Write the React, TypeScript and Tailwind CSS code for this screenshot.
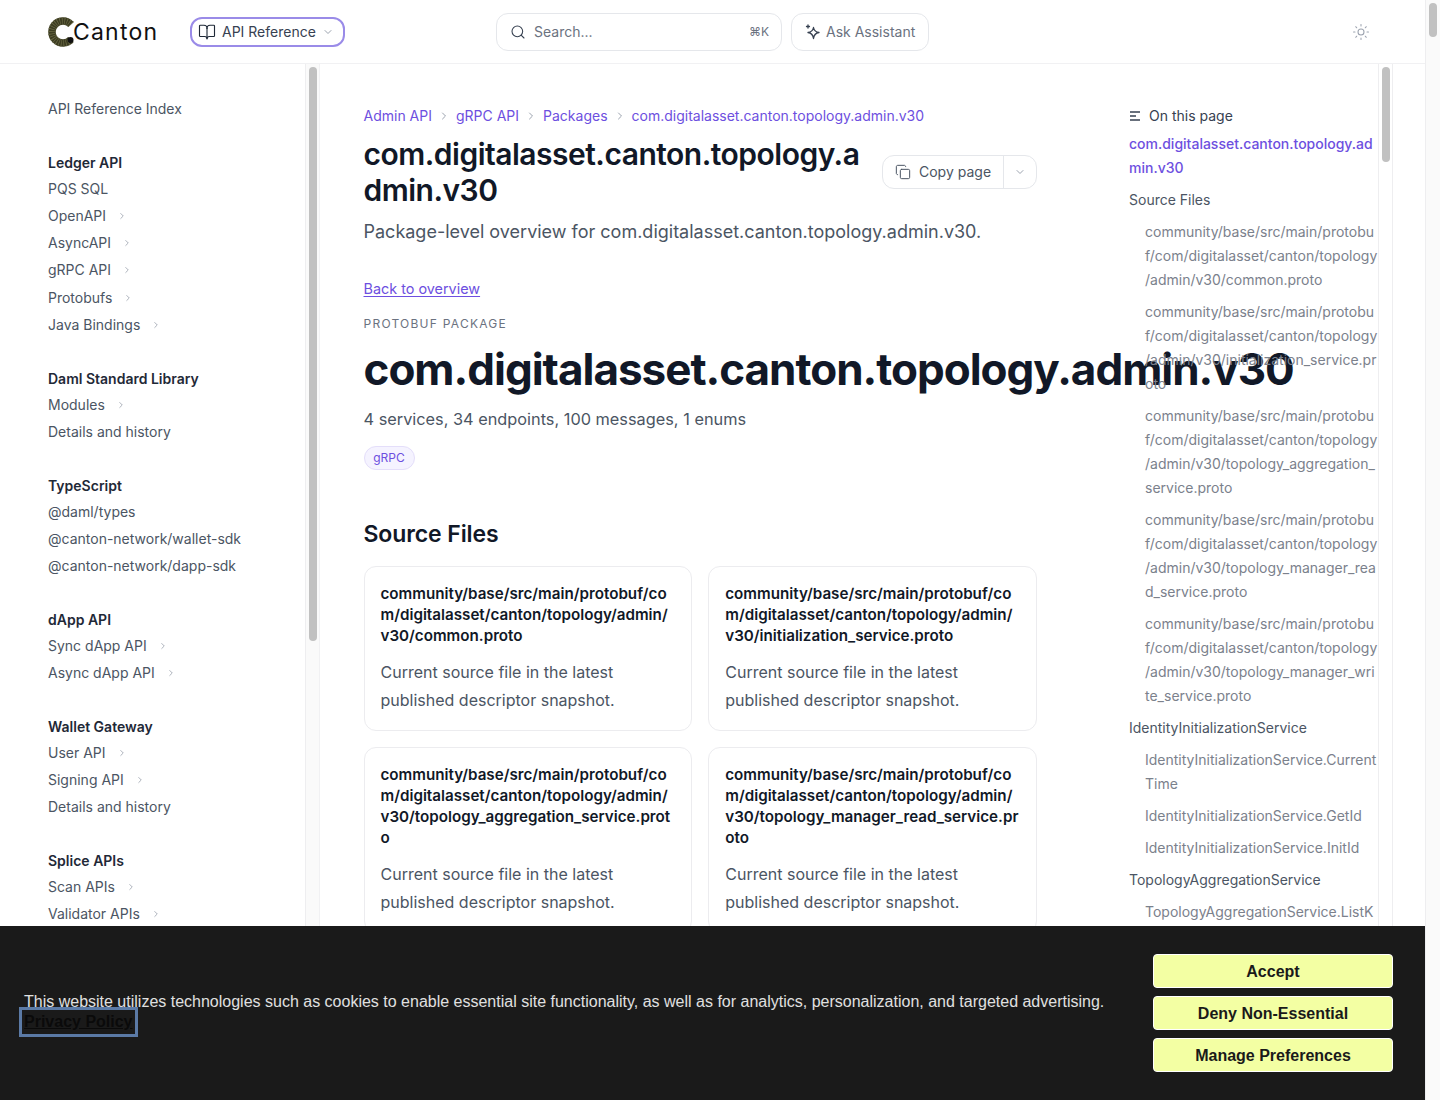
import React from 'react';
import { BookOpen, ChevronDown, ChevronRight, Copy, Search, Sun } from 'lucide-react';

type NavItem = { label: string; more?: boolean };
type NavGroup = { title?: string; items: NavItem[] };

const navGroups: NavGroup[] = [
  { items: [{ label: 'API Reference Index' }] },
  {
    title: 'Ledger API',
    items: [
      { label: 'PQS SQL' },
      { label: 'OpenAPI', more: true },
      { label: 'AsyncAPI', more: true },
      { label: 'gRPC API', more: true },
      { label: 'Protobufs', more: true },
      { label: 'Java Bindings', more: true },
    ],
  },
  {
    title: 'Daml Standard Library',
    items: [{ label: 'Modules', more: true }, { label: 'Details and history' }],
  },
  {
    title: 'TypeScript',
    items: [{ label: '@daml/types' }, { label: '@canton-network/wallet-sdk' }, { label: '@canton-network/dapp-sdk' }],
  },
  {
    title: 'dApp API',
    items: [{ label: 'Sync dApp API', more: true }, { label: 'Async dApp API', more: true }],
  },
  {
    title: 'Wallet Gateway',
    items: [{ label: 'User API', more: true }, { label: 'Signing API', more: true }, { label: 'Details and history' }],
  },
  {
    title: 'Splice APIs',
    items: [{ label: 'Scan APIs', more: true }, { label: 'Validator APIs', more: true }, { label: 'Wallet APIs', more: true }],
  },
];

const basePath = 'community/base/src/main/protobuf/com/digitalasset/canton/topology/admin/v30/';

const sourceFiles = [
  'common.proto',
  'initialization_service.proto',
  'topology_aggregation_service.proto',
  'topology_manager_read_service.proto',
  'topology_manager_write_service.proto',
];

const tocEntries: { label: string; sub?: boolean }[] = [
  { label: 'Source Files' },
  // zero-width space so a line can start with the slash
  ...sourceFiles.map((f) => ({ label: (basePath + f).replaceAll('/', '\u200b/'), sub: true })),
  { label: 'IdentityInitializationService' },
  { label: 'IdentityInitializationService.CurrentTime', sub: true },
  { label: 'IdentityInitializationService.GetId', sub: true },
  { label: 'IdentityInitializationService.InitId', sub: true },
  { label: 'TopologyAggregationService' },
  { label: 'TopologyAggregationService.ListKeyOwners', sub: true },
];

const crumbs = ['Admin API', 'gRPC API', 'Packages', 'com.digitalasset.canton.topology.admin.v30'];

const CantonLogo = () => (
  <svg width="28" height="30" viewBox="0 0 28 30" className="shrink-0">
    <path d="M23 7.5 A11 11 0 1 0 23 22.5" fill="none" stroke="#3c3c22" strokeWidth="7.5" />
    <path d="M23 7.5 A11 11 0 1 0 23 22.5" fill="none" stroke="#6a6a45" strokeWidth="7.5" strokeDasharray="0.7 1.6" />
    <circle cx="22.5" cy="23" r="3" fill="#111111" />
  </svg>
);

const AssistantIcon = () => (
  <svg width="16" height="16" viewBox="0 0 16 16" fill="none" stroke="#374151" strokeWidth="1.3" strokeLinejoin="round">
    <path d="M8.5 3.5 C9 6.5 10.5 8 14 8.5 C10.5 9 9 10.5 8.5 14.5 C8 10.5 6.5 9 3 8.5 C6.5 8 8 6.5 8.5 3.5 Z" />
    <path d="M3 1v3M1.5 2.5h3" strokeLinecap="round" />
  </svg>
);

const TocIcon = () => (
  <svg width="12" height="12" viewBox="0 0 12 12" stroke="#374151" strokeWidth="1.3">
    <path d="M1 2h10M1 6h6M1 10h10" />
  </svg>
);

const Scrollbar = ({ height, track }: { height: string; track: string }) => (
  <div className={`${track} shrink-0 pt-[3px]`}>
    <div className={`${height} rounded-full bg-[#c1c1c1]`} />
  </div>
);

const Header = () => (
  <header className="flex h-[64px] shrink-0 items-center border-b border-[#f1f1f3] pl-12">
    <div className="flex w-[142px] items-center">
      <CantonLogo />
      <span className="-ml-[3px] pt-[2px] text-[23px] leading-none font-normal tracking-[1.2px] text-[#111111]">Canton</span>
    </div>
    <button className="flex h-[30px] w-[155px] items-center rounded-xl border-2 border-[#9a8be8] pl-[6px] text-sm text-[#374151]">
      <BookOpen size={18} strokeWidth={1.5} className="text-[#1f2937]" />
      <span className="ml-[6px]">API Reference</span>
      <ChevronDown size={12} className="ml-[6px] text-[#9ca3af]" />
    </button>
    <div className="ml-[151px] flex h-[38px] w-[286px] items-center rounded-xl border border-[#e5e7eb] pr-3 pl-[13px] text-sm text-[#6b7280]">
      <Search size={16} strokeWidth={1.6} className="text-[#374151]" />
      <span className="ml-2">Search...</span>
      <span className="ml-auto text-xs text-[#6b7280]">⌘K</span>
    </div>
    <div className="ml-[9px] flex h-[38px] w-[138px] items-center rounded-xl border border-[#e5e7eb] pl-[13px] text-sm text-[#6b7280]">
      <AssistantIcon />
      <span className="ml-[5px]">Ask Assistant</span>
    </div>
    <Sun size={18} strokeWidth={1.4} className="ml-[423px] text-[#9ca3af]" />
  </header>
);

const Sidebar = () => (
  <aside className="flex w-[320px] shrink-0 border-r border-[#f1f1f3]">
    <nav className="flex w-[306px] shrink-0 flex-col gap-[26.6px] border-r border-[#eeeef0] pt-[31.5px] pl-12 text-sm text-[#4b5563]">
      {navGroups.map((group, i) => (
        <div key={i}>
          {group.title && (
            <div className="flex h-[26px] items-center pt-[2px] font-semibold text-[#1f2937]">{group.title}</div>
          )}
          {group.items.map((item) => (
            <div key={item.label} className="flex h-[27.2px] items-center">
              {item.label}
              {item.more && <ChevronRight size={10} className="ml-[11px] text-[#9ca3af]" />}
            </div>
          ))}
        </div>
      ))}
    </nav>
    <Scrollbar height="h-[574px]" track="w-[13px] bg-[#fafafa] pl-[3px] pr-[2px]" />
  </aside>
);

const SourceCard = ({ file }: { file: string }) => (
  <div className="rounded-xl border border-[#ececef] p-4">
    <div className="text-[15.2px] leading-[21px] font-semibold break-all text-[#111827]">{basePath + file}</div>
    <p className="mt-3 text-base leading-7 text-[#4b5563]">Current source file in the latest published descriptor snapshot.</p>
  </div>
);

const Main = () => (
  <main className="w-[809px] shrink-0 pt-[42px] pl-[43.5px]">
    <div className="w-[673.5px]">
      <div className="flex h-[20px] items-center text-sm text-[#6d4fe0]">
        {crumbs.map((c, i) => (
          <React.Fragment key={c}>
            {i > 0 && <ChevronRight size={12} className="mx-[6px] text-[#9ca3af]" />}
            <span>{c}</span>
          </React.Fragment>
        ))}
      </div>
      <div className="mt-[10px] flex items-center">
        <h1 className="w-[500px] text-[30px] leading-9 font-semibold tracking-[-0.5px] break-all text-[#111827]">
          com.digitalasset.canton.topology.admin.v30
        </h1>
        <div className="ml-auto flex h-[34px] w-[155px] items-center rounded-xl border border-[#e5e7eb] text-sm text-[#4b5563]">
          <Copy size={16} strokeWidth={1.5} className="ml-[12px]" />
          <span className="ml-2">Copy page</span>
          <span className="ml-auto flex h-full w-[33px] items-center justify-center border-l border-[#e5e7eb]">
            <ChevronDown size={12} className="text-[#9ca3af]" />
          </span>
        </div>
      </div>
      <p className="mt-[10px] text-lg leading-7 text-[#4b5563]">
        Package-level overview for com.digitalasset.canton.topology.admin.v30.
      </p>
      <a className="mt-[33px] block w-fit text-[14.4px] leading-5 text-[#6d4fe0] underline underline-offset-2">Back to overview</a>
      <div className="mt-[17px] text-xs leading-4 tracking-[1.25px] text-[#6b7280]">PROTOBUF PACKAGE</div>
      <h2 className="mt-[9px] text-[44px] leading-[56px] font-bold tracking-[-1px] whitespace-nowrap text-[#111827]">
        com.digitalasset.canton.topology.admin.v30
      </h2>
      <p className="mt-[8px] text-[16.32px] leading-7 text-[#4b5563]">4 services, 34 endpoints, 100 messages, 1 enums</p>
      <span className="mt-[13px] flex h-[24px] w-[51px] items-center justify-center rounded-full border border-[#e4defa] bg-[#f5f3ff] text-xs text-[#6d4fe0]">
        gRPC
      </span>
      <h3 className="mt-[48px] text-[23px] leading-8 font-semibold tracking-[-0.1px] text-[#111827]">Source Files</h3>
      <div className="mt-4 grid grid-cols-2 gap-4">
        {sourceFiles.map((f) => (
          <SourceCard key={f} file={f} />
        ))}
      </div>
    </div>
  </main>
);

const Toc = () => (
  <aside className="flex w-[264px] shrink-0">
    <div className="w-[249px] shrink-0 pt-[42px] text-sm leading-6 text-[#6b7280]">
      <div className="flex h-[20px] items-center text-[#374151]">
        <TocIcon />
        <span className="ml-2">On this page</span>
      </div>
      <div className="mt-[6px] font-medium break-all text-[#6d4fe0]">com.digitalasset.canton.topology.admin.v30</div>
      {tocEntries.map((e) => (
        <div key={e.label} className={e.sub ? 'mt-2 break-all pl-4 text-[#7b818c]' : 'mt-2 text-[#4b5563]'}>
          {e.label}
        </div>
      ))}
    </div>
    <Scrollbar height="h-[95px]" track="w-[15px] border-x border-[#eeeef0] pl-[3px] pr-[2px]" />
  </aside>
);

const CookieBanner = () => (
  <div className="absolute inset-x-0 bottom-0 flex h-[174px] items-center bg-[#1a1a1a] pr-8 pl-6 font-['Liberation_Sans',Arial,sans-serif] text-base">
    <div className="mb-[2px] flex-1 pr-[48px] leading-5 text-[#e0e0e0]">
      <p>This website utilizes technologies such as cookies to enable essential site functionality, as well as for analytics, personalization, and targeted advertising.</p>
      <a className="block w-fit font-bold text-[#0a0a0a] underline outline-[3px] outline-offset-[2px] outline-[#5b7aa6]">Privacy Policy</a>
    </div>
    <div className="flex w-[240px] shrink-0 flex-col gap-2">
      {['Accept', 'Deny Non-Essential', 'Manage Preferences'].map((b) => (
        <button key={b} className="h-[34px] rounded-[4px] border border-white bg-[#f3ffa3] pt-[1px] font-bold text-[#1a1a1a]">
          {b}
        </button>
      ))}
    </div>
  </div>
);

export default function App() {
  return (
    <div className="flex h-[1100px] w-full overflow-hidden bg-white font-['Inter',sans-serif]">
      <div className="relative flex w-[1425px] shrink-0 flex-col overflow-hidden">
        <Header />
        <div className="flex min-h-0 flex-1">
          <Sidebar />
          <Main />
          <Toc />
        </div>
        <CookieBanner />
      </div>
      <Scrollbar height="h-[34px]" track="flex-1 border-l border-[#eeeef0] bg-[#fafafa] pl-[3px] pr-[3px]" />
    </div>
  );
}
